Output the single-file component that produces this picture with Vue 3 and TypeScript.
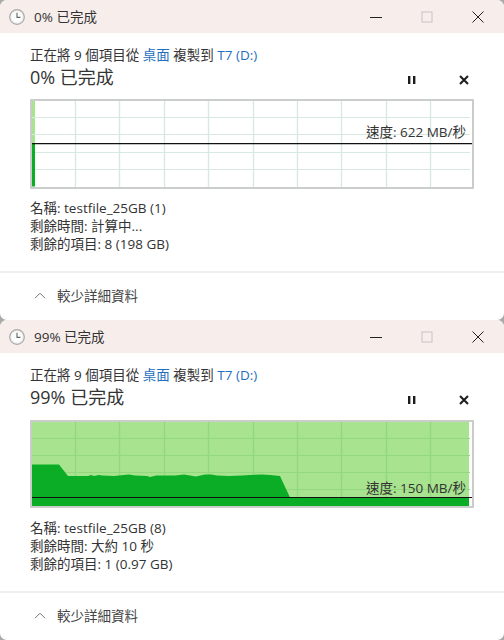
<script setup lang="ts">
interface CopyJob {
  percent: number
  fileName: string
  timeLeft: string
  itemsLeft: string
  speed: string
  chartHeight: number
  lineY: number
  labelTop: number
  lightPath: string
  darkPath: string
}

const jobs: CopyJob[] = [
  {
    percent: 0,
    fileName: 'testfile_25GB (1)',
    timeLeft: '計算中...',
    itemsLeft: '8 (198 GB)',
    speed: '622 MB/秒',
    chartHeight: 90,
    lineY: 44.7,
    labelTop: 23,
    lightPath: 'M2 1.5H5V44H2Z',
    darkPath: 'M2 44H5V87.5H2Z'
  },
  {
    percent: 99,
    fileName: 'testfile_25GB (8)',
    timeLeft: '大約 10 秒',
    itemsLeft: '1 (0.97 GB)',
    speed: '150 MB/秒',
    chartHeight: 88,
    lineY: 77.5,
    labelTop: 58,
    lightPath: 'M2 2H439V86H2Z',
    darkPath:
      'M2 44.5H29L38 56H58L61 55L64 56L69 55L72 55.5L84 56L94 55L99 54.5L105 55.5L117 56L120 57L126 55.5L145 55.5L154 54.5L160 55.5L166 56.5L175 54.5L181 54.5L187 55.5L199 56L212 55.5L220 55L232 54.5L240 55L250 56L260 77.5H439V86H2Z'
  }
]

function gridX(): number[] {
  return Array.from({ length: 9 }, (_, i) => Math.round(45 + i * 44.4) + 0.5)
}

function gridY(height: number): number[] {
  return Array.from({ length: 4 }, (_, i) => Math.round(1.5 + ((i + 1) * (height - 3)) / 5) - 0.5)
}
</script>

<template>
  <div class="page">
    <section v-for="job in jobs" :key="job.percent" class="dialog">
      <header class="titlebar">
        <svg class="clock" width="16" height="16" viewBox="0 0 16 16">
          <circle cx="8" cy="8" r="7.3" fill="#f1f1f1" stroke="#a9a9a9" stroke-width="1.2" />
          <circle cx="8" cy="8" r="5.4" fill="#fdfdfd" />
          <path d="M8 3.8V8.4H11.4" fill="none" stroke="#666" stroke-width="1.1" />
        </svg>
        <span class="title">{{ job.percent }}% 已完成</span>
        <div class="window-buttons">
          <svg width="12" height="12" viewBox="0 0 12 12">
            <path d="M0 6.5H12" stroke="#222" stroke-width="1" />
          </svg>
          <svg width="12" height="12" viewBox="0 0 12 12">
            <rect x="1" y="1" width="10" height="10" fill="none" stroke="#cfcaca" stroke-width="1.2" />
          </svg>
          <svg width="12" height="12" viewBox="0 0 12 12">
            <path d="M0.5 0.5L11.5 11.5M11.5 0.5L0.5 11.5" stroke="#222" stroke-width="1" />
          </svg>
        </div>
      </header>

      <div class="content">
        <p class="summary">
          正在將 9 個項目從 <span class="link">桌面</span> 複製到 <span class="link">T7 (D:)</span>
        </p>
        <div class="heading-row">
          <h1 class="heading">{{ job.percent }}% 已完成</h1>
          <div class="actions">
            <svg width="10" height="10" viewBox="0 0 10 10">
              <path d="M1 1H3.4V9H1ZM6 1H8.4V9H6Z" fill="#1c1c1c" />
            </svg>
            <svg width="10" height="10" viewBox="0 0 10 10">
              <path d="M1 1L9 9M9 1L1 9" stroke="#1c1c1c" stroke-width="2" />
            </svg>
          </div>
        </div>

        <div class="chart" :class="{ dense: job.percent > 0 }">
          <svg width="440" :height="job.chartHeight - 4" class="chart-svg">
            <!-- path coordinates are measured from the outer corner of the chart box -->
            <g transform="translate(-2 -2)">
              <path :d="job.lightPath" fill="#a8e48f" />
              <path
                v-for="x in gridX()"
                :key="x"
                :d="`M${x} 0V${job.chartHeight}`"
                :stroke="job.percent > 0 ? '#93d87e' : '#d8eadf'"
                stroke-width="1.4"
              />
              <path
                v-for="y in gridY(job.chartHeight)"
                :key="y"
                :d="`M2 ${y}H440`"
                :stroke="job.percent > 0 ? '#93d87e' : '#d8eadf'"
                stroke-width="1"
              />
              <path :d="job.darkPath" fill="#0bad26" />
              <path :d="`M2 ${job.lineY}H442`" stroke="#111" stroke-width="1.2" />
            </g>
          </svg>
          <span class="speed" :style="{ top: job.labelTop + 'px' }">速度: {{ job.speed }}</span>
        </div>

        <dl class="details">
          <div>名稱: {{ job.fileName }}</div>
          <div>剩餘時間: {{ job.timeLeft }}</div>
          <div>剩餘的項目: {{ job.itemsLeft }}</div>
        </dl>
      </div>

      <footer class="footer">
        <svg width="12" height="7" viewBox="0 0 12 7">
          <path d="M1 6.2L6 1.2L11 6.2" fill="none" stroke="#777" stroke-width="1" />
        </svg>
        <span>較少詳細資料</span>
      </footer>
    </section>
  </div>
</template>

<style>
html,
body {
  margin: 0;
  background: #a9a9a9;
}
</style>

<style scoped>
.page {
  width: 504px;
  height: 640px;
  overflow: hidden;
  font-family: "Open Sans", "Noto Sans CJK TC", sans-serif;
  font-size: 13.5px;
  color: #333;
}

.dialog {
  height: 320px;
  display: flex;
  flex-direction: column;
  background: #fff;
  border-radius: 7px;
  overflow: hidden;
}

.titlebar {
  height: 33px;
  flex: none;
  display: flex;
  align-items: center;
  padding: 0 20px 0 9px;
  background: #f7eeec;
}

.title {
  margin-left: 9px;
  line-height: 16px;
}

.window-buttons {
  margin-left: auto;
  display: flex;
  gap: 39px;
  align-items: center;
}

.content {
  flex: 1;
  padding: 13px 30px 0;
}

.summary {
  margin: 0;
  height: 18px;
  line-height: 18px;
}

.link {
  color: #1f6fc0;
}

.heading-row {
  display: flex;
  align-items: center;
  justify-content: space-between;
  height: 24px;
  margin-top: 1px;
}

.heading {
  margin: 0;
  font-size: 18px;
  font-weight: 400;
  line-height: 24px;
}

.actions {
  display: flex;
  gap: 42px;
  padding: 6px 5px 0 0;
}

.chart {
  position: relative;
  width: 444px;
  height: 90px;
  box-sizing: border-box;
  margin-top: 10px;
  border: 2px solid #cbcdcb;
  background: #fff;
}

.chart.dense {
  height: 88px;
  margin-top: 11px;
}

.chart-svg {
  display: block;
}

.speed {
  position: absolute;
  right: 6px;
  line-height: 16px;
  white-space: nowrap;
}

.details {
  margin: 10px 0 0;
  line-height: 18px;
}

.chart.dense + .details {
  margin-top: 11px;
}

.footer {
  flex: none;
  height: 49px;
  box-sizing: border-box;
  display: flex;
  align-items: center;
  gap: 11px;
  padding: 0 0 3px 34px;
  border-top: 2px solid #eee;
  color: #444;
}
</style>
